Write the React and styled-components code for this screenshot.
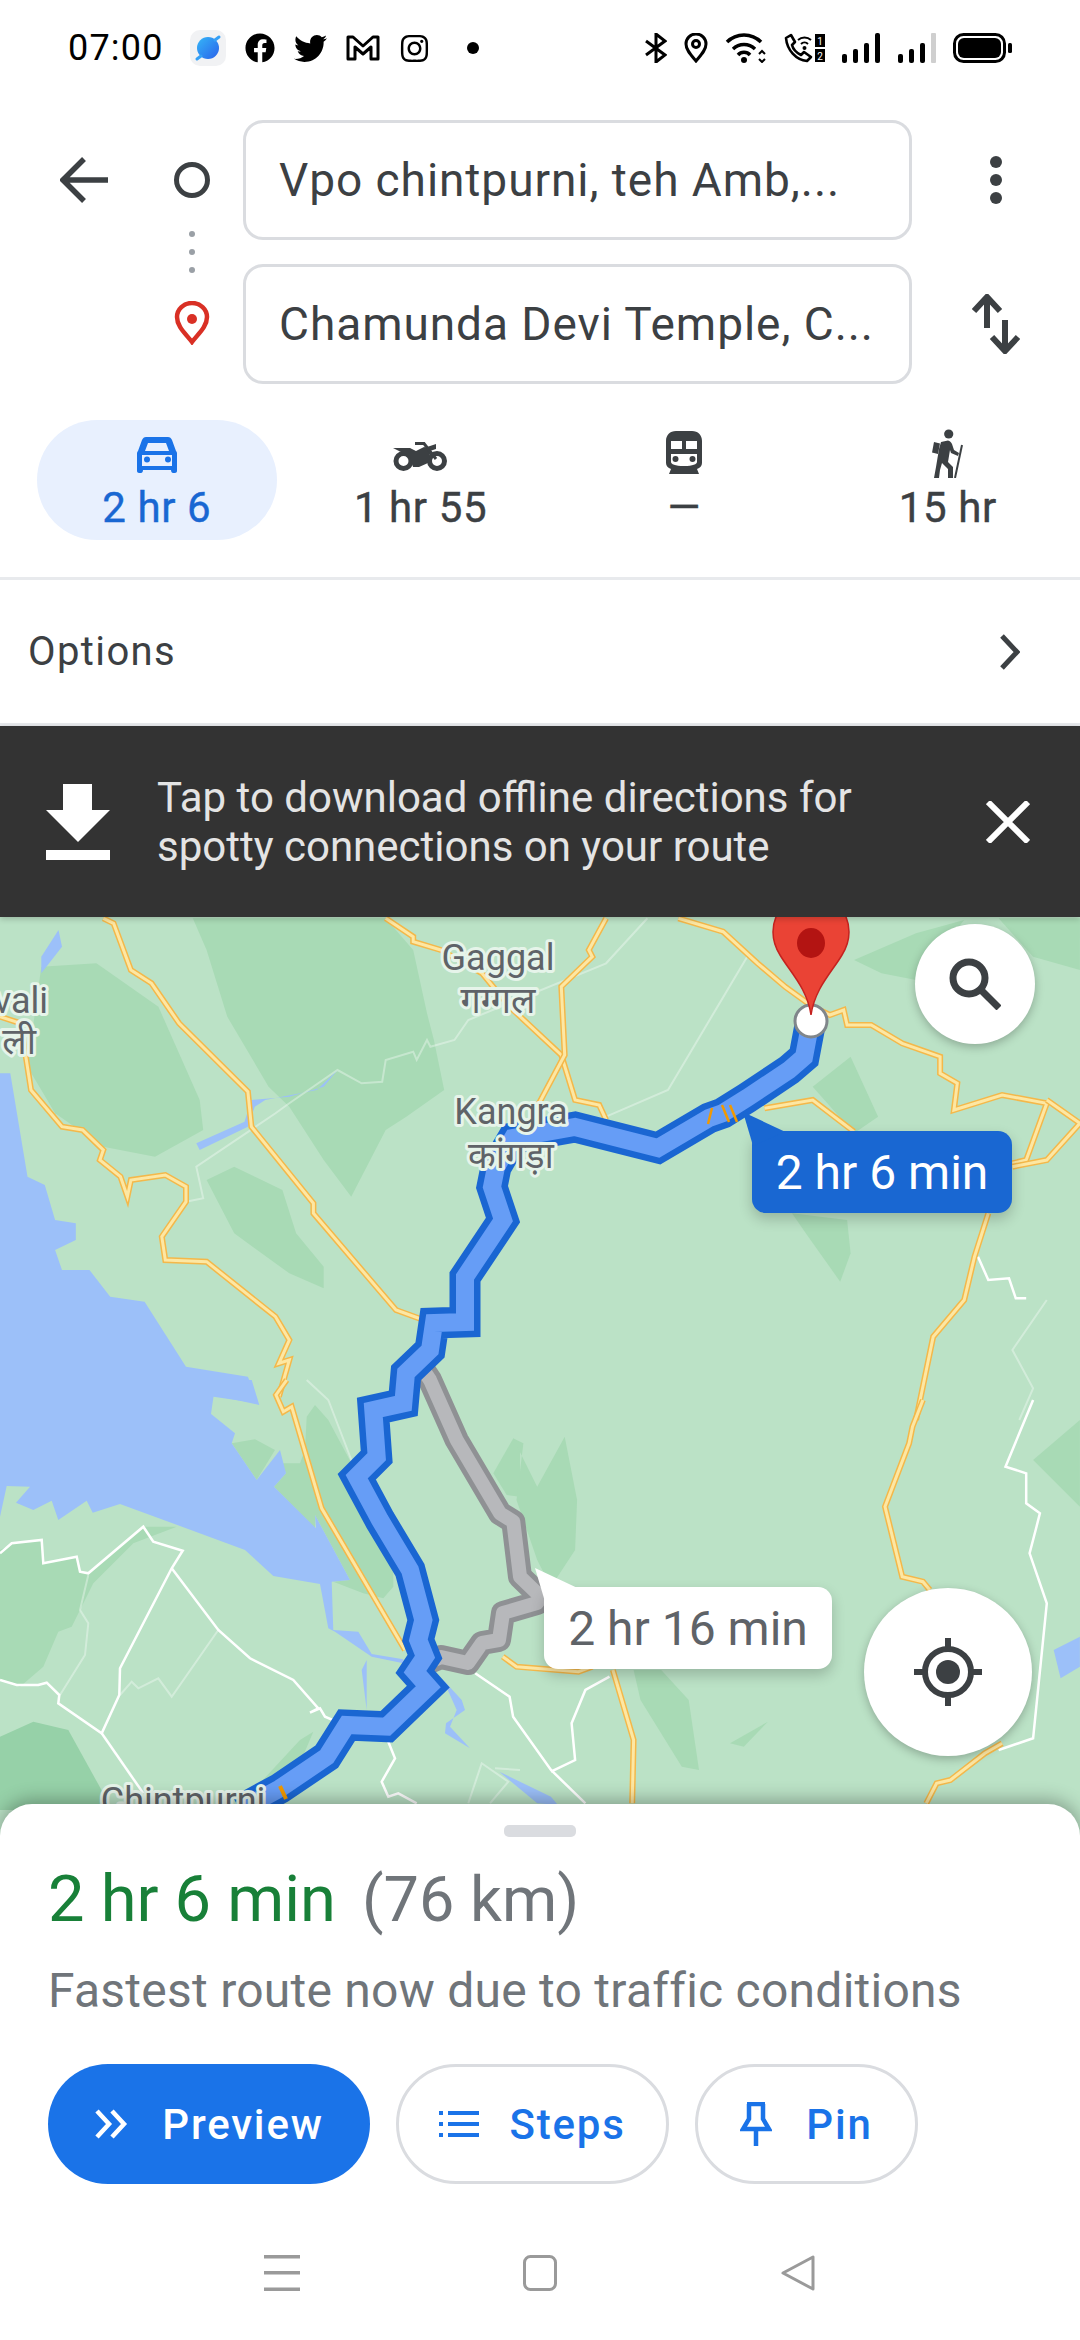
import styled, { createGlobalStyle } from "styled-components";
import { FaFacebook, FaTwitter, FaInstagram } from "react-icons/fa";

const GlobalStyle = createGlobalStyle`
  html, body { margin: 0; padding: 0; background: #fff; }
  body { font-family: Roboto, "Noto Sans", sans-serif; }
`;

const Page = styled.div`
  width: 1080px;
  height: 2340px;
  display: flex;
  flex-direction: column;
  overflow: hidden;
  background: #fff;
  color: #3c4043;
`;

const StatusBar = styled.div`
  height: 120px;
  flex: none;
  box-sizing: border-box;
  padding: 0 68px 24px 68px;
  display: flex;
  align-items: center;
  justify-content: space-between;
  color: #000;
`;
const StatusGroup = styled.div`
  display: flex;
  align-items: center;
  gap: ${(p) => p.$gap}px;
`;
const Time = styled.span`
  font-size: 36px;
  line-height: 1;
  letter-spacing: 1.2px;
  margin-right: 7px;
`;
const AppIcon = styled.div`
  width: 36px;
  height: 36px;
  border-radius: 10px;
  background: #f1f2f4;
  display: flex;
  align-items: center;
  justify-content: center;
`;
const NotifDot = styled.span`
  width: 12px;
  height: 12px;
  border-radius: 50%;
  background: #000;
  margin-left: 18px;
`;

const Header = styled.div`
  display: grid;
  flex: none;
  grid-template-columns: 140px 103px 669px 168px;
  grid-template-rows: 120px 120px;
  row-gap: 24px;
`;
const BackCell = styled.div`
  display: flex;
  align-items: center;
  padding-left: 60px;
`;
const Markers = styled.div`
  grid-column: 2;
  grid-row: 1 / 3;
  display: flex;
  flex-direction: column;
  align-items: center;
  padding-top: 42px;
`;
const OriginRing = styled.span`
  width: 36px;
  height: 36px;
  box-sizing: border-box;
  border: 5px solid #3c4043;
  border-radius: 50%;
`;
const RouteDots = styled.div`
  display: flex;
  flex-direction: column;
  gap: 12px;
  margin: 33px 0 28px;
`;
const RouteDot = styled.span`
  width: 6px;
  height: 6px;
  border-radius: 50%;
  background: #9aa0a6;
`;
const PlaceInput = styled.div`
  grid-column: 3;
  box-sizing: border-box;
  border: 3px solid #dadce0;
  border-radius: 20px;
  padding-left: 33px;
  display: flex;
  align-items: center;
  font-size: 46px;
  letter-spacing: 0.95px;
  color: #3c4043;
  white-space: nowrap;
`;
const HeaderAction = styled.div`
  grid-column: 4;
  display: flex;
  align-items: center;
  justify-content: center;
`;
const MoreDots = styled.div`
  display: flex;
  flex-direction: column;
  gap: 6px;
`;
const MoreDot = styled.span`
  width: 12px;
  height: 12px;
  border-radius: 50%;
  background: #3c4043;
`;

const Tabs = styled.div`
  display: grid;
  flex: none;
  grid-template-columns: repeat(4, 263.67px);
  padding: 36px 0 37px 25px;
  border-bottom: 3px solid #e8eaed;
`;
const Tab = styled.div`
  width: 240px;
  height: 120px;
  justify-self: center;
  border-radius: 60px;
  background: ${(p) => (p.$active ? "#e8f0fe" : "transparent")};
  color: ${(p) => (p.$active ? "#1967d2" : "#3c4043")};
  display: flex;
  flex-direction: column;
  align-items: center;
`;
const TabIcon = styled.div`
  height: 64px;
  box-sizing: border-box;
  padding-top: ${(p) => p.$nudge || 0}px;
  display: flex;
  align-items: center;
  justify-content: center;
`;
const TabLabel = styled.div`
  font-size: 42px;
  font-weight: 400;
  letter-spacing: 0.6px;
  line-height: 48px;
  -webkit-text-stroke: 0.4px currentColor;
`;

const OptionsRow = styled.div`
  flex: none;
  height: 146px;
  box-sizing: border-box;
  padding: 0 60px 0 28px;
  display: flex;
  align-items: center;
  justify-content: space-between;
  border-bottom: 3px solid #e8eaed;
  font-size: 40px;
  letter-spacing: 1.4px;
`;

const Banner = styled.div`
  flex: none;
  height: 191px;
  background: #333;
  box-sizing: border-box;
  padding: 0 50px 0 46px;
  display: flex;
  align-items: center;
  color: #e4e4e4;
  position: relative;
  z-index: 3;
  box-shadow: 0 2px 6px rgba(0, 0, 0, 0.2);
`;
const BannerText = styled.div`
  flex: 1;
  margin-left: 47px;
  font-size: 42px;
  line-height: 49px;
`;

const MapArea = styled.div`
  position: relative;
  flex: none;
  height: 919px;
  background: #bbe2c6;
  overflow: hidden;
`;
const MapSvg = styled.svg`
  display: block;
  width: 1080px;
  height: 919px;
`;
const Line = styled.polyline`
  fill: none;
  stroke: ${(p) => p.$color};
  stroke-width: ${(p) => p.$w};
  stroke-linejoin: ${(p) => p.$join || "miter"};
  opacity: ${(p) => p.$op || 1};
`;
const MapLabel = styled.text`
  font-family: Roboto, "Noto Sans", "Noto Sans Devanagari", sans-serif;
  font-size: ${(p) => p.$size || 36}px;
  fill: #5f6368;
  stroke: #e6f4ea;
  stroke-width: 6px;
  paint-order: stroke;
  stroke-linejoin: round;
`;
const RoundButton = styled.div`
  position: absolute;
  width: ${(p) => p.$size}px;
  height: ${(p) => p.$size}px;
  left: ${(p) => p.$left}px;
  top: ${(p) => p.$top}px;
  border-radius: 50%;
  background: #fff;
  box-shadow: 0 3px 10px rgba(0, 0, 0, 0.25);
  display: flex;
  align-items: center;
  justify-content: center;
`;
const Callout = styled.div`
  position: absolute;
  left: ${(p) => p.$left}px;
  top: ${(p) => p.$top}px;
  width: ${(p) => p.$width}px;
  height: 82px;
  border-radius: 14px;
  background: ${(p) => (p.$primary ? "#1967d2" : "#fff")};
  color: ${(p) => (p.$primary ? "#fff" : "#5f6368")};
  font-size: 48px;
  display: flex;
  align-items: center;
  justify-content: center;
  box-shadow: 0 6px 14px rgba(0, 0, 0, 0.2);

  &::before {
    content: "";
    position: absolute;
    left: -9px;
    top: -19px;
    width: 42px;
    height: 34px;
    background: inherit;
    clip-path: polygon(0 0, 100% 58%, 24% 100%);
  }
`;

const Sheet = styled.div`
  position: relative;
  z-index: 2;
  flex: 1;
  margin-top: -32px;
  border-radius: 32px 32px 0 0;
  background: #fff;
  box-shadow: 0 -4px 18px rgba(0, 0, 0, 0.3);
  display: flex;
  flex-direction: column;
  padding: 0 48px;
`;
const Handle = styled.div`
  width: 72px;
  height: 12px;
  border-radius: 5px;
  background: #dadce0;
  align-self: center;
  margin-top: 21px;
`;
const Title = styled.div`
  margin-top: 24px;
  font-size: 63px;
  line-height: 76px;
  color: #70757a;
  white-space: nowrap;
`;
const Duration = styled.span`
  font-size: 65px;
  color: #188038;
  margin-right: 26px;
`;
const Subtitle = styled.div`
  margin-top: 26px;
  font-size: 48px;
  letter-spacing: 0.25px;
  line-height: 54px;
  color: #70757a;
  white-space: nowrap;
`;
const Actions = styled.div`
  display: flex;
  gap: 26px;
  margin-top: 46px;
`;
const ActionButton = styled.div`
  width: ${(p) => p.$width}px;
  height: 120px;
  box-sizing: border-box;
  border-radius: 60px;
  border: ${(p) => (p.$primary ? "none" : "3px solid #dadce0")};
  background: ${(p) => (p.$primary ? "#1a73e8" : "#fff")};
  color: ${(p) => (p.$primary ? "#fff" : "#1a73e8")};
  display: flex;
  align-items: center;
  justify-content: center;
  gap: ${(p) => p.$gap || 34}px;
  font-size: 42px;
  letter-spacing: 1.8px;
  font-weight: 500;
`;
const NavBar = styled.div`
  display: grid;
  grid-template-columns: repeat(3, 258px);
  justify-content: center;
  align-items: center;
  justify-items: center;
  margin: 71px -48px 0;
`;

// map coordinates were read off crops of different scale, so they get mapped to page pixels here
const toPage = (top, sx) => (pts) =>
  pts
    .trim()
    .split(/\s+/)
    .map((p) => {
      const [x, y] = p.split(",").map(Number);
      return `${(x / sx).toFixed(1)},${(top + y / 3).toFixed(1)}`;
    })
    .join(" ");
const a = toPage(900, 1.452);
const b = toPage(1400, 1.452);
const c = toPage(1380, 3);

const darkAreas = [
  a("60,200 140,190 230,320 290,600 295,690 225,770 150,740 80,640 40,500"),
  a("280,55 560,55 600,150 620,340 630,420 645,570 590,650 560,690 510,890 470,780 420,620 390,560 330,350 300,150"),
  a("300,840 340,800 410,870 430,1000 470,1100 470,1165 420,1120 340,1000"),
  a("1235,470 1275,650 1240,700 1180,560"),
  a("1150,940 1230,960 1235,1060 1220,1145 1170,1000"),
  a("1450,55 1568,55 1568,210 1500,170"),
  a("1240,180 1330,100 1400,60 1330,240 1280,220"),
  c("0,510 40,490 125,480 130,550 230,530 240,575 265,580 430,440 470,440 530,440 400,490 280,610 240,690 215,740 175,755 130,860 60,920 0,900"),
  c("920,110 945,75 985,120 1060,260 1040,300 1180,570 1180,620 1150,655 1090,640 1000,605 1050,600 945,405 945,445 822,320 858,280 845,250 900,250 915,210"),
  c("695,190 765,178 825,210 770,300"),
  c("770,1220 900,1080 940,1055 900,1150 830,1210"),
  c("1480,280 1540,175 1560,200 1560,350 1520,345"),
  b("760,130 745,115 780,260 820,110 838,300 835,450 800,560 780,480 750,300"),
  b("920,810 960,810 1000,900 1015,1110 990,1100 930,900"),
  b("1568,60 1500,180 1568,320"),
  b("1060,1030 1115,965 1080,1040"),
];
const deepAreas = [c("0,1070 100,1025 205,1050 310,1240 310,1290 0,1290")];

const water = [
  a("0,520 15,520 40,830 65,855 80,960 110,970 110,1020 80,1050 90,1110 130,1110 160,1190 210,1205 270,1400 360,1430 375,1510 310,1490 305,1560 0,1560"),
  c("0,410 20,318 90,320 48,368 100,390 155,362 175,420 260,362 278,398 360,372 540,438 735,510 820,588 960,612 985,745 1005,755 1115,830 1210,850 1210,838 1115,822 1075,755 1000,750 995,605 1050,600 945,405 948,445 822,320 858,280 840,210 770,300 695,190 705,160 625,95 640,45 778,75 755,0 0,0"),
  a("85,90 90,140 60,220 60,170"),
  a("490,510 460,570 385,600 370,620 360,680 290,750 285,730 355,665 365,600 420,590 470,560"),
  c("1085,870 1100,840 1100,990"),
  c("1330,900 1385,960 1395,990 1338,1030 1335,1060 1410,1105 1350,1040 1370,990"),
  b("725,1115 800,1190 810,1215 780,1210"),
  b("1568,710 1530,750 1540,835 1568,800"),
];

const whiteLines = [
  b("1500,0 1460,200 1490,220 1490,310 1510,340 1505,380 1495,460 1520,610 1500,1015 1450,1050"),
  c("0,520 35,490 125,480 130,550 230,530 240,575 265,580 430,440 460,485 548,512 515,565 360,865 358,945 305,1060 175,970 178,945 140,908 115,915 50,915 0,900"),
  c("515,565 655,750 750,835 880,900 955,985 930,998 960,985 975,1010 1010,1025"),
  c("305,1060 430,1240"),
  c("1165,1085 1185,1135 1145,1205 1165,1250 1195,1240 1250,1270"),
  b("690,820 740,890 745,950 800,1110 850,1210"),
  b("885,830 850,870 830,970 835,1080 800,1115"),
  a("1420,1070 1435,1140 1465,1135 1475,1195 1490,1195"),
];
const faintLines = [
  c("265,585 240,690 265,730 255,825 180,945"),
  c("360,945 395,905 415,925 475,895 515,950 655,750"),
  c("920,0 985,60 1060,255"),
  c("1405,1270 1445,1150 1525,1205 1470,1270"),
  c("1485,1165 1560,1170"),
  a("940,55 880,190 680,360 660,420 625,440 620,420 605,480 600,455 560,480 555,545 525,550 490,510 420,610 400,640 285,800 295,895 270,905"),
  a("1085,170 970,570 880,650"),
  a("1520,1200 1470,1350 1500,1465 1480,1560"),
];
const roads = [
  a("150,55 165,70 190,210 220,250 260,370 360,575 365,680 455,910 455,940 575,1230 615,1260"),
  a("0,350 30,370 45,570 90,680 120,690 150,750 145,780 175,830 185,890 190,840 240,825 270,860 270,905 235,1010 240,1080 300,1085 400,1250 420,1320 405,1390 420,1380 405,1490"),
  c("860,0 828,45 850,95 875,80 965,385 1215,810"),
  a("560,55 600,110 600,125 640,150 700,220 740,320 815,465 835,600 870,615 880,660"),
  a("880,55 855,150 860,170 815,260 820,465 780,620"),
  a("985,55 1050,95 1100,190 1140,260 1180,320 1205,345 1225,330 1230,375 1265,375 1310,430 1365,470 1365,520 1390,550 1385,630 1455,585 1520,610 1490,780 1470,790"),
  a("1520,600 1568,670 1520,780 1470,800"),
  a("1110,625 1180,600 1240,695"),
  a("1435,940 1415,1070 1400,1200 1355,1310 1330,1560"),
  b("1340,0 1325,80 1320,130 1285,320 1310,530 1340,545 1350,570"),
  b("730,770 750,800 840,815 860,800"),
  b("890,810 920,1020 918,1210"),
  b("1455,1030 1430,1060 1380,1140 1360,1150 1345,1210"),
];

const altRoute = `${c("1250,-60 1290,0 1370,180 1500,400 1540,425 1560,590")} 541,1597 537,1603 503,1613 499,1640 482,1643 468,1663 441,1657 427,1663`;
const mainRoute = `811,1020 804,1057 789,1070 747,1098 723,1113 709,1118 658,1148 575,1127 513,1138 496,1167 492,1187 503,1220 465,1277 465,1322 434,1323 430,1350 406,1373 ${c(
  "1210,70 1120,90 1130,230 1070,290 1140,420 1230,570 1270,720 1255,780 1275,830 1245,875 1285,920 1160,1040 1040,1035 980,1130 840,1225 720,1290"
)}`;

const RouteMap = () => (
  <MapSvg viewBox="0 917 1080 919">
    {darkAreas.map((pts) => (
      <polygon key={pts} points={pts} fill="#a8dab5" />
    ))}
    {deepAreas.map((pts) => (
      <polygon key={pts} points={pts} fill="#96d1a8" />
    ))}
    {water.map((pts) => (
      <polygon key={pts} points={pts} fill="#9cc0f9" />
    ))}
    {faintLines.map((pts) => (
      <Line key={pts} points={pts} $color="#fff" $w={2} $op={0.35} />
    ))}
    {whiteLines.map((pts) => (
      <Line key={pts} points={pts} $color="#fff" $w={2.5} />
    ))}
    {roads.map((pts) => (
      <g key={pts}>
        <Line points={pts} $color="#f4b84a" $w={6} />
        <Line points={pts} $color="#fde7a3" $w={3} />
      </g>
    ))}
    <Line points={altRoute} $color="#8f9194" $w={24} $join="round" />
    <Line points={altRoute} $color="#b7b8bb" $w={14} $join="round" />
    <Line points={mainRoute} $color="#1a66d2" $w={31} />
    <Line points={mainRoute} $color="#669df6" $w={18} />
    <Line points="712,1108 708,1124" $color="#f29900" $w={2.5} />
    <Line points="730,1105 737,1122" $color="#f29900" $w={2.5} />
    <Line points="722,1105 729,1122" $color="#f29900" $w={2.5} />
    <Line points="280,1786 286,1799" $color="#f29900" $w={4} />

    <MapLabel x="498" y="970" textAnchor="middle">Gaggal</MapLabel>
    <MapLabel x="498" y="1013" textAnchor="middle">गग्गल</MapLabel>
    <MapLabel x="511" y="1124" textAnchor="middle">Kangra</MapLabel>
    <MapLabel x="511" y="1168" textAnchor="middle">कांगड़ा</MapLabel>
    <MapLabel x="48" y="1013" textAnchor="end">vali</MapLabel>
    <MapLabel x="36" y="1054" textAnchor="end">ली</MapLabel>
    <MapLabel x="183" y="1813" textAnchor="middle">Chintpurni</MapLabel>

    <circle cx="811" cy="1021" r="16" fill="#fff" stroke="#80868b" strokeWidth="3" />
    <path
      d="M811 1015 C807 988 790 972 780 955 C775 947 773 940 773 932 A38 38 0 1 1 849 932 C849 940 847 947 842 955 C832 972 815 988 811 1015 Z"
      fill="#ea4335"
      stroke="#c5221f"
      strokeWidth="1.5"
    />
    <ellipse cx="811" cy="943" rx="14" ry="15" fill="#b31412" />
  </MapSvg>
);

const StatusLeft = () => (
  <StatusGroup $gap={19}>
    <Time>07:00</Time>
    <AppIcon>
      <svg width="28" height="28" viewBox="0 0 28 28">
        <defs>
          <linearGradient id="planet" x1="0" y1="0" x2="1" y2="1">
            <stop offset="0" stopColor="#35b6f8" />
            <stop offset="1" stopColor="#2a62ea" />
          </linearGradient>
        </defs>
        <circle cx="14" cy="14" r="11" fill="url(#planet)" />
        <path d="M3 25 L7 22 M25 3 L21 6" stroke="#35a0f6" strokeWidth="3" strokeLinecap="round" />
      </svg>
    </AppIcon>
    <FaFacebook size={30} />
    <FaTwitter size={33} />
    <svg width="34" height="26" viewBox="0 0 34 26">
      <path d="M2 24 V2 H7 L17 11 L27 2 H32 V24 H25 V12 L17 19 L9 12 V24 Z" fill="none" stroke="#000" strokeWidth="3" strokeLinejoin="round" />
    </svg>
    <FaInstagram size={31} />
    <NotifDot />
  </StatusGroup>
);

const StatusRight = () => (
  <StatusGroup $gap={17}>
    <svg width="22" height="30" viewBox="0 0 22 30">
      <polyline points="1,8 20,22 11,29 11,1 20,8 1,22" fill="none" stroke="#000" strokeWidth="3" />
    </svg>
    <svg width="24" height="30" viewBox="0 0 24 30">
      <path d="M12 28 C7 22 2 17 2 11 A10 10 0 0 1 22 11 C22 17 17 22 12 28 Z" fill="none" stroke="#000" strokeWidth="3" />
      <circle cx="12" cy="11" r="3.5" fill="none" stroke="#000" strokeWidth="3" />
    </svg>
    <svg width="42" height="30" viewBox="0 0 42 30">
      <path d="M2 9 A24 24 0 0 1 36 9 M8 16 A16 16 0 0 1 30 16 M13 22 A8 8 0 0 1 25 22" fill="none" stroke="#000" strokeWidth="3.5" />
      <circle cx="19" cy="27" r="3" fill="#000" />
      <path d="M34 21 L37 18 L40 21 M34 26 L37 29 L40 26" fill="none" stroke="#000" strokeWidth="2" />
    </svg>
    <svg width="41" height="30" viewBox="0 0 41 30">
      <path d="M2 5 L7 2 L11 9 L8 12 C9 16 13 20 17 22 L20 19 L27 24 L23 28 C12 27 3 17 2 5 Z" fill="none" stroke="#000" strokeWidth="2.6" strokeLinejoin="round" />
      <path d="M14 7 A10 10 0 0 1 27 7 M17 11 A5 5 0 0 1 24 11" fill="none" stroke="#000" strokeWidth="2" />
      <circle cx="20.5" cy="15" r="2" fill="#000" />
      <rect x="31" y="1" width="10" height="13" fill="#000" />
      <rect x="31" y="16" width="10" height="13" fill="#000" />
      <text x="36" y="12" fontSize="10" fill="#fff" textAnchor="middle" fontFamily="Roboto">1</text>
      <text x="36" y="27" fontSize="10" fill="#fff" textAnchor="middle" fontFamily="Roboto">2</text>
    </svg>
    <svg width="39" height="30" viewBox="0 0 39 30">
      <rect x="0" y="21" width="5" height="9" rx="2" />
      <rect x="11" y="16" width="5" height="14" rx="2" />
      <rect x="22" y="10" width="5" height="20" rx="2" />
      <rect x="33" y="0" width="5" height="30" rx="2" />
    </svg>
    <svg width="38" height="30" viewBox="0 0 38 30">
      <rect x="0" y="21" width="5" height="9" rx="2" />
      <rect x="11" y="16" width="5" height="14" rx="2" />
      <rect x="22" y="10" width="5" height="20" rx="2" />
      <rect x="33" y="0" width="5" height="30" rx="1" fill="#cfcfcf" />
    </svg>
    <svg width="59" height="30" viewBox="0 0 59 30">
      <rect x="1.5" y="1.5" width="50" height="27" rx="9" fill="none" stroke="#000" strokeWidth="3" />
      <rect x="5" y="5" width="43" height="20" rx="6" fill="#000" />
      <rect x="55" y="10" width="4" height="10" rx="1.5" fill="#000" />
    </svg>
  </StatusGroup>
);

const iconLine = { fill: "none", stroke: "#3c4043" };

export default function App() {
  return (
    <Page>
      <GlobalStyle />
      <StatusBar>
        <StatusLeft />
        <StatusRight />
      </StatusBar>

      <Header>
        <BackCell>
          <svg width="48" height="46" viewBox="0 0 48 46" {...iconLine} strokeWidth="5.5">
            <path d="M48 23 H4 M24 2 L3 23 L24 44" />
          </svg>
        </BackCell>
        <Markers>
          <OriginRing />
          <RouteDots>
            <RouteDot />
            <RouteDot />
            <RouteDot />
          </RouteDots>
          <svg width="36" height="44" viewBox="0 0 36 44">
            <path d="M18 41 C12 33 3 26 3 16 A15 14 0 0 1 33 16 C33 26 24 33 18 41 Z" fill="none" stroke="#d93025" strokeWidth="4.5" />
            <circle cx="18" cy="18" r="5" fill="#d93025" />
          </svg>
        </Markers>
        <PlaceInput>Vpo chintpurni, teh Amb,...</PlaceInput>
        <HeaderAction>
          <MoreDots>
            <MoreDot />
            <MoreDot />
            <MoreDot />
          </MoreDots>
        </HeaderAction>
        <BackCell />
        <PlaceInput>Chamunda Devi Temple, C...</PlaceInput>
        <HeaderAction>
          <svg width="48" height="60" viewBox="0 0 48 60" {...iconLine} strokeWidth="6">
            <path d="M15 34 V4 M2 17 L15 3 L28 17" />
            <path d="M33 26 V56 M20 43 L33 57 L46 43" />
          </svg>
        </HeaderAction>
      </Header>

      <Tabs>
        <Tab $active>
          <TabIcon $nudge={6}>
            <svg width="40" height="36" viewBox="0 0 40 36" fill="#1a73e8">
              <path
                fillRule="evenodd"
                d="M9 0 H31 C33 0 34 1 35 3 L39 14 C40 15 40 16 40 17 V34 C40 35 39 36 38 36 H36 C35 36 34 35 34 33 H6 C6 35 5 36 4 36 H2 C1 36 0 35 0 34 V17 C0 16 0 15 1 14 L5 3 C6 1 7 0 9 0 Z M11 6 L8 14 H32 L29 6 Z M5 18 V29 H35 V18 Z"
              />
              <circle cx="10" cy="22.5" r="3" />
              <circle cx="31" cy="22.5" r="3" />
            </svg>
          </TabIcon>
          <TabLabel>2 hr 6</TabLabel>
        </Tab>
        <Tab>
          <TabIcon $nudge={9}>
            <svg width="54" height="29" viewBox="0 0 54 29">
              <circle cx="10.5" cy="19" r="7.5" fill="none" stroke="#3c4043" strokeWidth="5" />
              <circle cx="44" cy="19" r="7.5" fill="none" stroke="#3c4043" strokeWidth="5" />
              <path d="M0 6 H17 L23 9 L31 5 L38 7 L35 21 L26 25 H20 L17 14 L8 10 Z" fill="#3c4043" />
              <path d="M22 1.5 H31 L43 17" fill="none" stroke="#3c4043" strokeWidth="3" />
              <path d="M34 5 L43 2 V7 L37 9 Z" fill="#3c4043" />
            </svg>
          </TabIcon>
          <TabLabel>1 hr 55</TabLabel>
        </Tab>
        <Tab>
          <TabIcon>
            <svg width="36" height="43" viewBox="0 0 36 43" fill="#3c4043">
              <path
                fillRule="evenodd"
                d="M10 0 H26 C32 0 36 4 36 10 V32 C36 35 34 37 31 38 L33 43 H3 L5 38 C2 37 0 35 0 32 V10 C0 4 4 0 10 0 Z M5 10 V18 H16 V10 Z M20 10 V18 H31 V10 Z M5 23 V31 C5 33 9 35 18 35 C27 35 31 33 31 31 V23 Z"
              />
              <circle cx="9.5" cy="28" r="3" />
              <circle cx="26.5" cy="28" r="3" />
            </svg>
          </TabIcon>
          <TabLabel>—</TabLabel>
        </Tab>
        <Tab>
          <TabIcon $nudge={3}>
            <svg width="31" height="49" viewBox="0 0 31 49" fill="#3c4043">
              <circle cx="16.7" cy="5" r="4.6" />
              <path d="M2 13 L8 14.5 L6 25 L0 23.5 Z" />
              <path d="M9 13 L16 11.5 C18 12 19 13 20 15 L22 21 L27 24 L26 27 L19 24 L18 21 L16 33 L21 38 L21 49 L16 49 L16 40 L10 34 L8 41 L7 49 L2 49 L4 38 L7 20 Z" />
              <path d="M30 16 L23 49" fill="none" stroke="#3c4043" strokeWidth="2" />
            </svg>
          </TabIcon>
          <TabLabel>15 hr</TabLabel>
        </Tab>
      </Tabs>

      <OptionsRow>
        <span>Options</span>
        <svg width="20" height="36" viewBox="0 0 20 36" {...iconLine} strokeWidth="5">
          <path d="M2 2 L17 18 L2 34" />
        </svg>
      </OptionsRow>

      <Banner>
        <svg width="64" height="76" viewBox="0 0 64 76" fill="#fff">
          <path d="M17 0 H46 V26 H64 L32 58 L0 26 H17 Z" />
          <rect x="0" y="66" width="64" height="10" />
        </svg>
        <BannerText>
          Tap to download offline directions for
          <br />
          spotty connections on your route
        </BannerText>
        <svg width="44" height="42" viewBox="0 0 44 42" fill="none" stroke="#fff" strokeWidth="6">
          <path d="M2 1 L42 41 M42 1 L2 41" />
        </svg>
      </Banner>

      <MapArea>
        <RouteMap />
        <RoundButton $size={120} $left={915} $top={7}>
          <svg width="52" height="52" viewBox="0 0 52 52" {...iconLine} strokeWidth="7">
            <circle cx="20" cy="20" r="16" />
            <path d="M31 31 L50 50" />
          </svg>
        </RoundButton>
        <RoundButton $size={168} $left={864} $top={671}>
          <svg width="68" height="68" viewBox="0 0 68 68" {...iconLine} strokeWidth="6">
            <circle cx="34" cy="34" r="23" />
            <path d="M34 0 V11 M34 57 V68 M0 34 H11 M57 34 H68" />
            <circle cx="34" cy="34" r="12" fill="#3c4043" stroke="none" />
          </svg>
        </RoundButton>
        <Callout $primary $left={752} $top={214} $width={260}>2 hr 6 min</Callout>
        <Callout $left={544} $top={670} $width={288}>2 hr 16 min</Callout>
      </MapArea>

      <Sheet>
        <Handle />
        <Title>
          <Duration>2 hr 6 min</Duration>(76 km)
        </Title>
        <Subtitle>Fastest route now due to traffic conditions</Subtitle>
        <Actions>
          <ActionButton $primary $width={322}>
            <svg width="34" height="30" viewBox="0 0 34 30" fill="none" stroke="#fff" strokeWidth="4.5">
              <path d="M3 2 L15 15 L3 28 M18 2 L30 15 L18 28" />
            </svg>
            Preview
          </ActionButton>
          <ActionButton $width={273} $gap={30}>
            <svg width="40" height="26" viewBox="0 0 40 26" fill="#1a73e8">
              <rect x="0" y="0" width="4" height="4" />
              <rect x="0" y="11" width="4" height="4" />
              <rect x="0" y="22" width="4" height="4" />
              <rect x="9" y="0" width="31" height="4" />
              <rect x="9" y="11" width="31" height="4" />
              <rect x="9" y="22" width="31" height="4" />
            </svg>
            Steps
          </ActionButton>
          <ActionButton $width={223}>
            <svg width="32" height="44" viewBox="0 0 32 44" fill="none" stroke="#1a73e8" strokeWidth="4.5">
              <path d="M7 2 H25 M9 2 V17 L3 27 H29 L23 17 V2 M16 27 V44" />
            </svg>
            Pin
          </ActionButton>
        </Actions>
        <NavBar>
          <svg width="36" height="36" viewBox="0 0 36 36" fill="#9a9a9a">
            <rect y="0" width="36" height="3.5" />
            <rect y="16" width="36" height="3.5" />
            <rect y="32.5" width="36" height="3.5" />
          </svg>
          <svg width="34" height="36" viewBox="0 0 34 36" fill="none" stroke="#9a9a9a" strokeWidth="3">
            <rect x="1.5" y="1.5" width="31" height="33" rx="6" />
          </svg>
          <svg width="34" height="36" viewBox="0 0 34 36" fill="none" stroke="#9a9a9a" strokeWidth="3" strokeLinejoin="round">
            <path d="M32 2 V34 L2 18 Z" />
          </svg>
        </NavBar>
      </Sheet>
    </Page>
  );
}
